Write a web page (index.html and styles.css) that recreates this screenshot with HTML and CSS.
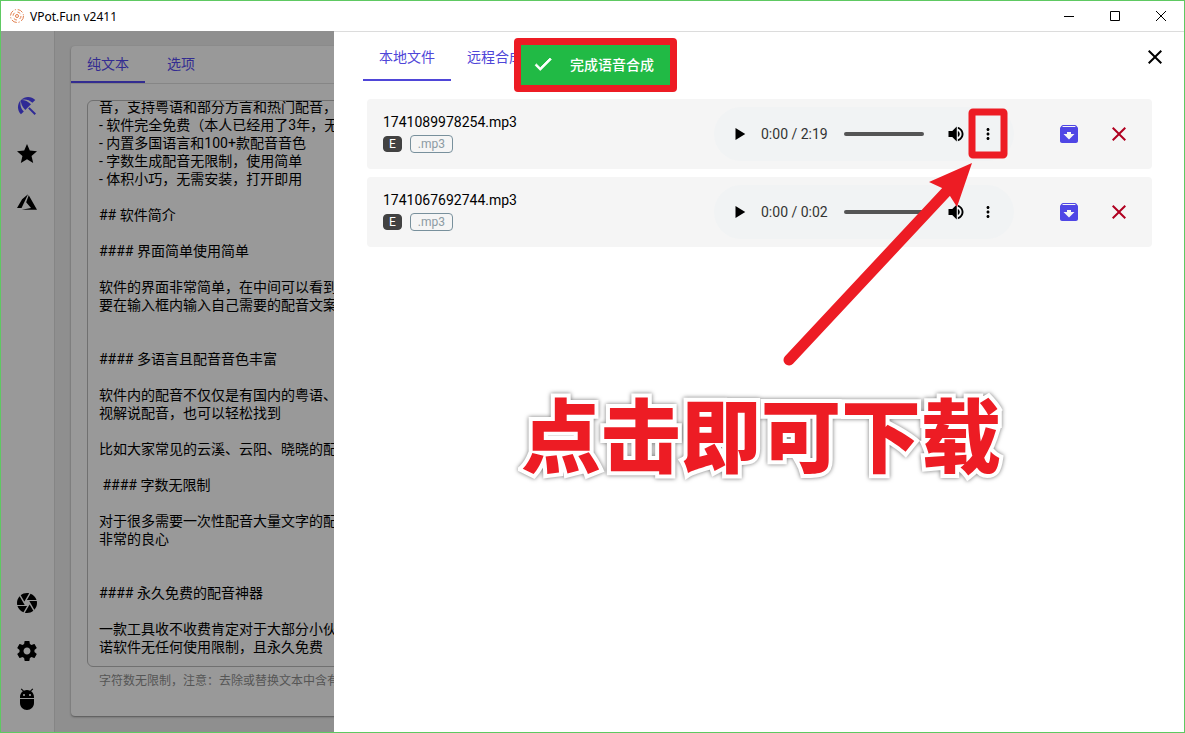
FILE: index.html
```
<!DOCTYPE html>
<html lang="zh-CN">
<head>
<meta charset="utf-8">
<title>VPot.Fun v2411</title>
<link rel="stylesheet" href="styles.css">
</head>
<body>
<svg class="defs" aria-hidden="true">
  <symbol id="i-play" viewBox="0 0 24 24"><path d="M6 4v16l13-8z"/></symbol>
  <symbol id="i-volume" viewBox="0 0 24 24"><path d="M2 8v8h5l6 6V2L7 8H2zm15 4c0-1.77-1.02-3.29-2.5-4.03v8.05c1.48-.73 2.5-2.25 2.5-4.02zM14.500 2.500v2.400c2.890.86 5 3.800 5 7.100s-2.110 6.240-5 7.100v2.400c4.200-.91 7.500-4.900 7.500-9.500s-3.300-8.590-7.500-9.500z"/></symbol>
  <symbol id="i-more" viewBox="0 0 24 24"><path d="M12 8c1.1 0 2-.9 2-2s-.9-2-2-2-2 .9-2 2 .9 2 2 2zm0 2c-1.1 0-2 .9-2 2s.9 2 2 2 2-.9 2-2-.9-2-2-2zm0 6c-1.1 0-2 .9-2 2s.9 2 2 2 2-.9 2-2-.9-2-2-2z"/></symbol>
  <symbol id="i-close" viewBox="0 0 24 24"><path d="M19 6.41 17.59 5 12 10.59 6.41 5 5 6.41 10.59 12 5 17.59 6.41 19 12 13.41 17.59 19 19 17.59 13.41 12z"/></symbol>
  <symbol id="i-archive" viewBox="0 0 24 24"><path d="M20.54 5.23l-1.39-1.68C18.88 3.21 18.47 3 18 3H6c-.47 0-.88.21-1.16.55L3.46 5.23C3.17 5.57 3 6.02 3 6.5V19c0 1.1.9 2 2 2h14c1.1 0 2-.9 2-2V6.5c0-.48-.17-.93-.46-1.27zM12 17.5L6.5 12H10v-2h4v2h3.5L12 17.5zM5.12 5l.81-1h12l.94 1H5.12z"/></symbol>
</svg>
<div class="window">
  <header class="titlebar">
    <svg class="logo" viewBox="0 0 16 16" aria-hidden="true">
      <circle cx="8" cy="8" r="6.500" stroke-dasharray="5.400 1.800 1.200 1.810"/>
      <circle cx="8" cy="8" r="4" stroke-dasharray="3.280 3"/>
      <circle cx="8" cy="8" r="1.500"/>
    </svg>
    <h1 class="title">VPot.Fun v2411</h1>
    <div class="controls">
      <button class="control" aria-label="最小化"><svg viewBox="0 0 12 12"><path d="M1 6.5h10"/></svg></button>
      <button class="control" aria-label="最大化"><svg viewBox="0 0 12 12"><path d="M1.5 1.5h9v9h-9z"/></svg></button>
      <button class="control" aria-label="关闭窗口"><svg viewBox="0 0 12 12"><path d="M1 1l10 10M11 1L1 11"/></svg></button>
    </div>
  </header>
  <div class="body">
    <nav class="sidebar">
      <div class="nav-group">
        <button class="nav-item nav-active" aria-label="首页"><svg viewBox="0 0 24 24"><path d="M13.127 14.56l1.43-1.43 6.44 6.443L19.57 21zm4.293-5.73l2.86-2.86c-3.95-3.95-10.35-3.96-14.3-.02 3.93-1.3 8.31-.25 11.44 2.88zM5.95 5.98c-3.94 3.95-3.93 10.35.02 14.3l2.86-2.86C5.7 14.29 4.65 9.91 5.95 5.98zm.02-.02l-.01.01c-.38 3.01 1.17 6.88 4.3 10.02l5.73-5.73c-3.13-3.13-7.01-4.68-10.02-4.3z"/></svg></button>
        <button class="nav-item" aria-label="收藏"><svg viewBox="0 0 24 24"><path d="M12,17.27L18.18,21L16.54,13.97L22,9.24L14.81,8.62L12,2L9.19,8.62L2,9.24L7.45,13.97L5.82,21L12,17.27Z"/></svg></button>
        <button class="nav-item" aria-label="Azure"><svg viewBox="0 0 24 24"><path d="M13.05,4.24L6.56,18.05L2,18L7.09,9.24L13.05,4.24M13.75,5.33L22,19.76H6.74L16.04,18.1L11.17,12.31L13.75,5.33Z"/></svg></button>
      </div>
      <div class="nav-group">
        <button class="nav-item" aria-label="镜头"><svg viewBox="0 0 24 24"><path d="M13.73,15L9.83,21.76C10.53,21.91 11.25,22 12,22C14.4,22 16.6,21.15 18.32,19.75L14.66,13.4M2.46,15C3.38,17.92 5.61,20.26 8.45,21.34L12.12,15M8.54,12L4.64,5.25C3,7 2,9.39 2,12C2,12.68 2.07,13.35 2.2,14H9.69M21.8,10H14.31L14.6,10.5L19.36,18.75C21,16.97 22,14.6 22,12C22,11.31 21.93,10.64 21.8,10M21.54,9C20.62,6.07 18.39,3.74 15.55,2.66L11.88,9M9.4,10.5L14.17,2.24C13.47,2.09 12.75,2 12,2C9.6,2 7.4,2.84 5.68,4.25L9.34,10.6L9.4,10.5Z"/></svg></button>
        <button class="nav-item" aria-label="设置"><svg viewBox="0 0 24 24"><path d="M19.43 12.98c.04-.32.07-.64.07-.98s-.03-.66-.07-.98l2.11-1.65c.19-.15.24-.42.12-.64l-2-3.46c-.12-.22-.39-.3-.61-.22l-2.49 1c-.52-.4-1.08-.73-1.69-.98l-.38-2.65C14.46 2.18 14.25 2 14 2h-4c-.25 0-.46.18-.49.42l-.38 2.65c-.61.25-1.17.59-1.69.98l-2.49-1c-.23-.09-.49 0-.61.22l-2 3.46c-.13.22-.07.49.12.64l2.11 1.65c-.04.32-.07.65-.07.98s.03.66.07.98l-2.11 1.65c-.19.15-.24.42-.12.64l2 3.46c.12.22.39.3.61.22l2.49-1c.52.4 1.08.73 1.69.98l.38 2.65c.03.24.24.42.49.42h4c.25 0 .46-.18.49-.42l.38-2.65c.61-.25 1.17-.59 1.69-.98l2.49 1c.23.09.49 0 .61-.22l2-3.46c.12-.22.07-.49-.12-.64l-2.11-1.65zM12 15.5c-1.93 0-3.5-1.57-3.5-3.5s1.57-3.5 3.5-3.5 3.5 1.57 3.5 3.5-1.57 3.5-3.5 3.5z"/></svg></button>
        <button class="nav-item" aria-label="调试"><svg viewBox="0 0 24 24"><path d="M5 16c0 3.87 3.13 7 7 7s7-3.13 7-7v-4H5v4zM16.12 4.37l2.1-2.1-.82-.83-2.3 2.31C14.16 3.28 13.12 3 12 3s-2.16.28-3.09.75L6.6 1.44l-.82.83 2.1 2.1C6.14 5.64 5 7.68 5 10v1h14v-1c0-2.32-1.14-4.36-2.88-5.63zM9 9c-.55 0-1-.45-1-1s.45-1 1-1 1 .45 1 1-.45 1-1 1zm6 0c-.55 0-1-.45-1-1s.45-1 1-1 1 .45 1 1-.45 1-1 1z"/></svg></button>
      </div>
    </nav>
    <main class="main">
      <section class="editor">
        <div class="tabs editor-tabs" role="tablist">
          <button class="tab tab-active" role="tab" aria-selected="true">纯文本</button>
          <button class="tab" role="tab" aria-selected="false">选项</button>
        </div>
        <div class="field">
          <textarea class="source" id="source" wrap="off" aria-label="纯文本" aria-describedby="hint">

音，支持粤语和部分方言和热门配音，
- 软件完全免费（本人已经用了3年，无
- 内置多国语言和100+款配音音色
- 字数生成配音无限制，使用简单
- 体积小巧，无需安装，打开即用

## 软件简介

#### 界面简单使用简单

软件的界面非常简单，在中间可以看到
要在输入框内输入自己需要的配音文案


#### 多语言且配音音色丰富

软件内的配音不仅仅是有国内的粤语、
视解说配音，也可以轻松找到

比如大家常见的云溪、云阳、晓晓的配

 #### 字数无限制

对于很多需要一次性配音大量文字的配
非常的良心


#### 永久免费的配音神器

一款工具收不收费肯定对于大部分小伙
诺软件无任何使用限制，且永久免费</textarea>
          <p class="hint" id="hint">字符数无限制，注意：去除或替换文本中含有</p>
        </div>
      </section>
    </main>
    <aside class="drawer">
      <div class="drawer-head">
        <div class="tabs" role="tablist">
          <button class="tab tab-tall tab-active" role="tab" aria-selected="true">本地文件</button>
          <button class="tab tab-tall" role="tab" aria-selected="false">远程合成</button>
        </div>
        <button class="icon-button" aria-label="关闭"><svg><use href="#i-close"/></svg></button>
      </div>
      <ul class="files">
        <li class="file">
          <div class="info">
            <span class="name">1741089978254.mp3</span>
            <span class="badges"><span class="badge badge-dark">E</span><span class="badge">.mp3</span></span>
          </div>
          <div class="player">
            <button class="player-button" aria-label="播放"><svg><use href="#i-play"/></svg></button>
            <span class="time">0:00 / 2:19</span>
            <input class="seek" type="range" value="0" aria-label="进度">
            <button class="player-button" aria-label="音量"><svg><use href="#i-volume"/></svg></button>
            <button class="player-button" aria-label="更多"><svg><use href="#i-more"/></svg></button>
          </div>
          <div class="actions">
            <button class="icon-button save" aria-label="保存"><svg><use href="#i-archive"/></svg></button>
            <button class="icon-button remove" aria-label="删除"><svg><use href="#i-close"/></svg></button>
          </div>
        </li>
        <li class="file">
          <div class="info">
            <span class="name">1741067692744.mp3</span>
            <span class="badges"><span class="badge badge-dark">E</span><span class="badge">.mp3</span></span>
          </div>
          <div class="player">
            <button class="player-button" aria-label="播放"><svg><use href="#i-play"/></svg></button>
            <span class="time">0:00 / 0:02</span>
            <input class="seek" type="range" value="0" aria-label="进度">
            <button class="player-button" aria-label="音量"><svg><use href="#i-volume"/></svg></button>
            <button class="player-button" aria-label="更多"><svg><use href="#i-more"/></svg></button>
          </div>
          <div class="actions">
            <button class="icon-button save" aria-label="保存"><svg><use href="#i-archive"/></svg></button>
            <button class="icon-button remove" aria-label="删除"><svg><use href="#i-close"/></svg></button>
          </div>
        </li>
      </ul>
    </aside>
  </div>
  <div class="toast" role="status">
    <svg class="toast-icon" viewBox="0 0 24 24"><path d="M9 16.17 4.83 12l-1.42 1.41L9 19 21 7l-1.41-1.41z"/></svg>
    <span>完成语音合成</span>
  </div>
  <svg class="marks" width="500" height="380" viewBox="700 0 500 380" aria-hidden="true">
    <rect x="971" y="111" width="32" height="43" rx="1"/>
    <path class="shaft" d="M788 359 945 191"/>
    <path class="head" d="M971 162 928 181 941 187 949 195 956 206z"/>
  </svg>
  <p class="callout">点击即可下载</p>
</div>
<script src="main.js"></script>
</body>
</html>
```
FILE: styles.css
```
* {
  box-sizing: border-box;
}

body {
  margin: 0;
  font-family: Roboto, "Noto Sans CJK SC", sans-serif;
  font-size: 14px;
  color: #000;
}

button {
  display: flex;
  align-items: center;
  justify-content: center;
  padding: 0;
  border: 0;
  background: none;
  color: inherit;
  font: inherit;
}

svg {
  fill: currentColor;
}

.defs {
  display: none;
}

.window {
  position: relative;
  display: flex;
  flex-direction: column;
  height: 100vh;
  border: 1px solid #5ec962;
  background: #fff;
  overflow: hidden;
}

.titlebar {
  display: flex;
  align-items: center;
  height: 30px;
  flex: none;
  padding-left: 8px;
  gap: 5px;
}

.logo {
  width: 16px;
  height: 16px;
  fill: none;
  stroke: #e2804f;
}

.title {
  flex: 1;
  margin: 0;
  font: 12px "Noto Sans", sans-serif;
}

.controls {
  display: flex;
}

.control {
  width: 46px;
  height: 28px;
}

.control svg {
  width: 12px;
  height: 12px;
  fill: none;
  stroke: #000;
}

.body {
  position: relative;
  display: flex;
  flex: 1;
  min-height: 0;
  background: #8f8f8f;
}

.sidebar {
  display: flex;
  flex-direction: column;
  justify-content: space-between;
  width: 54px;
  flex: none;
  padding: 51px 0 9px;
  background: #999;
  border-right: 1px solid #858585;
}

.nav-item {
  width: 52px;
  height: 48px;
}

.nav-item svg,
.icon-button svg {
  width: 24px;
  height: 24px;
}

.nav-active {
  color: #2f2a96;
}

.main {
  display: flex;
  flex: 1;
  padding: 15px 16px 16px;
}

.editor {
  display: flex;
  flex-direction: column;
  flex: 1;
  background: #999;
  border-radius: 4px;
  box-shadow: 0 1px 2px #555;
}

.tabs {
  display: flex;
  color: #4f46d8;
}

.editor-tabs {
  color: #332c91;
  border-bottom: 1px solid #868686;
}

.tab {
  min-width: 72px;
  height: 37px;
  padding: 0 16px 2px;
  border-bottom: 2px solid transparent;
}

.tab-tall {
  height: 50px;
  padding-bottom: 0;
}

.tab-active {
  border-bottom-color: currentColor;
}

.field {
  display: flex;
  flex-direction: column;
  flex: 1;
  padding: 16px;
}

.source {
  flex: 1;
  margin: 0;
  padding: 10px 11px;
  border: 1px solid #707070;
  border-radius: 6px;
  background: none;
  color: #000;
  font: inherit;
  line-height: 18px;
  resize: none;
  scrollbar-width: none;
}

.hint {
  margin: 0;
  padding: 4px 12px 9px;
  color: #555;
  font-size: 12px;
  line-height: 20px;
}

.drawer {
  position: absolute;
  top: 0;
  right: 0;
  bottom: 0;
  width: calc(100% - 333px);
  padding: 0 32px 0 33px;
  border-top: 1px solid #dcdcdc;
  background: #fff;
}

.drawer-head {
  display: flex;
  justify-content: space-between;
  margin: 0 -15px 17px -4px;
}

.tab-tall {
  height: 49px;
}

.icon-button {
  width: 50px;
  height: 50px;
}

.drawer-head .icon-button {
  width: 24px;
}

.files {
  display: flex;
  flex-direction: column;
  gap: 8px;
  margin: 0;
  padding: 0;
  list-style: none;
}

.file {
  display: flex;
  align-items: center;
  height: 70px;
  padding: 0 8px 0 16px;
  border-radius: 4px;
  background: #f5f5f5;
}

.info {
  display: flex;
  flex-direction: column;
  flex: 1;
  gap: 4px;
  padding-bottom: 2px;
}

.name {
  line-height: 18px;
}

.badges {
  display: flex;
  align-items: center;
  gap: 8px;
}

.badge {
  padding: 0 7px;
  border: 1px solid #78909c;
  border-radius: 4px;
  color: #8c9ba3;
  font-size: 12px;
  line-height: 16px;
}

.badge-dark {
  padding: 0 5px;
  border-color: #424242;
  background: #424242;
  color: #fff;
  line-height: 14px;
}

.player {
  display: flex;
  align-items: center;
  width: 300px;
  height: 54px;
  padding: 0 10px;
  border-radius: 27px;
  background: #f1f3f4;
}

.player-button {
  width: 32px;
  height: 32px;
}

.player-button svg {
  width: 18px;
  height: 18px;
}

.time {
  width: 85px;
  padding-left: 5px;
  color: #333;
}

.seek {
  appearance: none;
  flex: 1;
  min-width: 0;
  height: 4px;
  margin: 0 16px 0 3px;
  border-radius: 2px;
  background: #555;
}

.seek::-webkit-slider-thumb {
  appearance: none;
  width: 0;
  height: 0;
}

.actions {
  display: flex;
  padding-left: 30px;
}

.save {
  color: #4f46e5;
}

.remove {
  color: #b00020;
}

.toast {
  position: absolute;
  top: 37px;
  left: 513px;
  display: flex;
  align-items: center;
  gap: 16px;
  height: 54px;
  padding: 0 16px 2px 11px;
  border: 7px solid #ed1c24;
  border-radius: 4px;
  background: #21ba45;
  color: #fff;
  font-weight: 500;
}

.toast-icon {
  width: 22px;
  height: 22px;
  stroke: currentColor;
}

.marks {
  position: absolute;
  top: 0;
  left: 700px;
  fill: none;
  stroke: #ed1c24;
  stroke-width: 7;
  pointer-events: none;
}

.shaft {
  stroke-width: 11;
  stroke-linecap: round;
}

.head {
  fill: #ed1c24;
  stroke: none;
}

.callout {
  position: absolute;
  top: 380px;
  left: 520px;
  margin: 0;
  color: #ed1c24;
  font-family: "Noto Sans CJK SC", sans-serif;
  font-size: 80px;
  font-weight: 900;
  line-height: 100px;
  white-space: nowrap;
  -webkit-text-stroke: 8px #fff;
  paint-order: stroke fill;
  filter: drop-shadow(0 0 2px #777);
}
```
FILE: main.js
```
const source = document.getElementById("source");
source.scrollTop = source.scrollHeight;
```
